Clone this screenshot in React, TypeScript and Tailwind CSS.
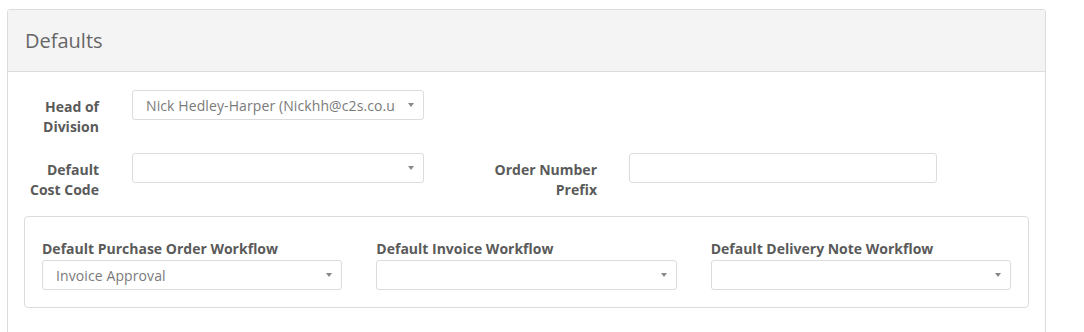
const FONT = "font-['Open_Sans',sans-serif]";

function Caret() {
  return (
    <svg width="6" height="4" viewBox="0 0 6 4" className="shrink-0">
      <path d="M0 0h6L3 4z" fill="#888" />
    </svg>
  );
}

function Select({ value, width }: { value?: string; width: string }) {
  return (
    <div
      className={`flex h-[30px] items-center rounded-[3px] border border-[#dcdcdc] bg-white pl-[13px] pr-[9px] ${width}`}
    >
      <span className="mr-[12px] min-w-0 flex-1 overflow-hidden whitespace-nowrap text-[14px] tracking-[0.1px] text-[#7a7a7a]">
        {value ?? ""}
      </span>
      <Caret />
    </div>
  );
}

function Label({ children, width, className = "" }: { children: React.ReactNode; width: string; className?: string }) {
  return (
    <div className={`pt-[7px] text-right text-[14px] font-bold leading-[20px] text-[#5a5a5a] ${width} ${className}`}>
      {children}
    </div>
  );
}

export default function App() {
  return (
    <div className={`h-[332px] w-[1084px] overflow-hidden bg-white pl-[7px] pt-[9px] ${FONT}`}>
      <div className="w-[1039px] rounded-t-[3px] border border-[#dcdcdc]">
        <div className="flex h-[62px] items-center border-b border-[#dcdcdc] bg-[#f4f4f4] pl-[17px]">
          <h2 className="text-[20px] font-normal text-[#666]">Defaults</h2>
        </div>

        <div className="px-4 pt-[18px] pb-8">
          {/* head of division */}
          <div className="mb-[16px] flex items-start">
            <Label width="w-[75px]">Head of Division</Label>
            <div className="ml-[33px]">
              <Select width="w-[292px]" value="Nick Hedley-Harper (Nickhh@c2s.co.uk)" />
            </div>
          </div>

          {/* cost code + prefix */}
          <div className="mb-[16px] flex items-start">
            <Label width="w-[75px]">Default Cost Code</Label>
            <div className="ml-[33px]">
              <Select width="w-[292px]" />
            </div>
            <Label width="w-[110px]" className="ml-[63px]">Order Number Prefix</Label>
            <div className="ml-[32px] h-[30px] w-[308px] rounded-[3px] border border-[#dcdcdc] bg-white" />
          </div>

          {/* workflows */}
          <div className="rounded-[4px] border border-[#dcdcdc] px-[17px] pt-[22px] pb-[17px]">
            <div className="grid grid-cols-3 gap-x-[34px]">
              {[
                ["Default Purchase Order Workflow", "Invoice Approval"],
                ["Default Invoice Workflow", undefined],
                ["Default Delivery Note Workflow", undefined],
              ].map(([label, value]) => (
                <div key={label}>
                  <div className="mb-[1px] text-[14px] font-bold leading-[20px] text-[#5a5a5a]">{label}</div>
                  <Select width="w-full" value={value} />
                </div>
              ))}
            </div>
          </div>
        </div>
      </div>
    </div>
  );
}
